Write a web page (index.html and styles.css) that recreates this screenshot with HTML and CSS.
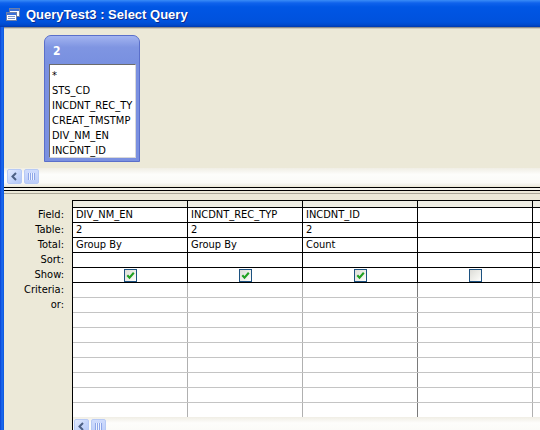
FILE: index.html
```html
<!DOCTYPE html>
<html>
<head>
<meta charset="utf-8">
<link rel="stylesheet" href="styles.css">
</head>
<body>
<div class="win">
  <div class="titlebar">
    <svg class="ticon" viewBox="0 0 14 13" width="14" height="13">
      <rect x="3.5" y="0.5" width="10" height="8" fill="#fff" stroke="#6d7fa8"/>
      <rect x="4" y="1" width="9" height="2" fill="#3a6fd8"/>
      <rect x="0.5" y="4.5" width="10" height="8" fill="#fff" stroke="#6d7fa8"/>
      <rect x="1" y="5" width="9" height="2" fill="#3a6fd8"/>
      <rect x="2" y="8" width="7" height="1" fill="#7b93c9"/>
      <rect x="2" y="10" width="7" height="1" fill="#7b93c9"/>
    </svg>
    <span class="title">QueryTest3 : Select Query</span>
  </div>
  <div class="main">
    <div class="frame-l"></div>
    <div class="client">
      <div class="sep-top"></div>
      <div class="upper">
        <div class="canvas">
          <div class="tbl">
            <div class="tbl-head">2</div>
            <div class="tbl-list">
              <div class="item">*</div>
              <div class="item">STS_CD</div>
              <div class="item">INCDNT_REC_TY</div>
              <div class="item">CREAT_TMSTMP</div>
              <div class="item">DIV_NM_EN</div>
              <div class="item">INCDNT_ID</div>
            </div>
          </div>
        </div>
        <div class="scroll">
          <div class="sbtn"><svg viewBox="0 0 15 15" width="15" height="15"><path d="M9 4 L5.5 7.5 L9 11" fill="none" stroke="#4d6185" stroke-width="2"/></svg></div>
          <div class="sthumb"><span class="grip"></span></div>
        </div>
      </div>
      <div class="splitter"></div>
      <div class="lower">
        <div class="labels">
          <div class="lbl">Field:</div>
          <div class="lbl">Table:</div>
          <div class="lbl">Total:</div>
          <div class="lbl">Sort:</div>
          <div class="lbl">Show:</div>
          <div class="lbl">Criteria:</div>
          <div class="lbl">or:</div>
        </div>
        <div class="grid-area">
          <div class="grid">
            <div class="row sel"><div class="cell"></div><div class="cell"></div><div class="cell"></div><div class="cell"></div><div class="cell"></div></div>
            <div class="row"><div class="cell">DIV_NM_EN</div><div class="cell">INCDNT_REC_TYP</div><div class="cell">INCDNT_ID</div><div class="cell"></div><div class="cell"></div></div>
            <div class="row"><div class="cell">2</div><div class="cell">2</div><div class="cell">2</div><div class="cell"></div><div class="cell"></div></div>
            <div class="row"><div class="cell">Group By</div><div class="cell">Group By</div><div class="cell">Count</div><div class="cell"></div><div class="cell"></div></div>
            <div class="row"><div class="cell"></div><div class="cell"></div><div class="cell"></div><div class="cell"></div><div class="cell"></div></div>
            <div class="row">
              <div class="cell chk"><span class="cb"><svg viewBox="0 0 11 11" width="11" height="11"><path d="M2.3 5.2 L4.5 7.6 L8.8 2.8" fill="none" stroke="#21a121" stroke-width="2.1"/></svg></span></div>
              <div class="cell chk"><span class="cb"><svg viewBox="0 0 11 11" width="11" height="11"><path d="M2.3 5.2 L4.5 7.6 L8.8 2.8" fill="none" stroke="#21a121" stroke-width="2.1"/></svg></span></div>
              <div class="cell chk"><span class="cb"><svg viewBox="0 0 11 11" width="11" height="11"><path d="M2.3 5.2 L4.5 7.6 L8.8 2.8" fill="none" stroke="#21a121" stroke-width="2.1"/></svg></span></div>
              <div class="cell chk"><span class="cb"></span></div>
              <div class="cell"></div>
            </div>
            <div class="row soft"><div class="cell"></div><div class="cell"></div><div class="cell c3"></div><div class="cell"></div><div class="cell"></div></div>
            <div class="row soft"><div class="cell"></div><div class="cell"></div><div class="cell c3"></div><div class="cell"></div><div class="cell"></div></div>
            <div class="row soft"><div class="cell"></div><div class="cell"></div><div class="cell c3"></div><div class="cell"></div><div class="cell"></div></div>
            <div class="row soft"><div class="cell"></div><div class="cell"></div><div class="cell c3"></div><div class="cell"></div><div class="cell"></div></div>
            <div class="row soft"><div class="cell"></div><div class="cell"></div><div class="cell c3"></div><div class="cell"></div><div class="cell"></div></div>
            <div class="row soft"><div class="cell"></div><div class="cell"></div><div class="cell c3"></div><div class="cell"></div><div class="cell"></div></div>
            <div class="row soft"><div class="cell"></div><div class="cell"></div><div class="cell c3"></div><div class="cell"></div><div class="cell"></div></div>
            <div class="row soft"><div class="cell"></div><div class="cell"></div><div class="cell c3"></div><div class="cell"></div><div class="cell"></div></div>
            <div class="row filler"><div class="cell"></div><div class="cell"></div><div class="cell c3"></div><div class="cell"></div><div class="cell"></div></div>
          </div>
          <div class="scroll bottom">
            <div class="sbtn"><svg viewBox="0 0 15 15" width="15" height="15"><path d="M9 4 L5.5 7.5 L9 11" fill="none" stroke="#4d6185" stroke-width="2"/></svg></div>
            <div class="sthumb"><span class="grip"></span></div>
          </div>
        </div>
      </div>
    </div>
  </div>
</div>
</body>
</html>
```
FILE: styles.css
```css
html, body {
  margin: 0;
  padding: 0;
}
body {
  width: 540px;
  height: 430px;
  overflow: hidden;
  font-family: "DejaVu Sans Condensed", "DejaVu Sans", sans-serif;
  font-size: 11px;
  color: #000;
}
.win {
  width: 540px;
  height: 430px;
  display: flex;
  flex-direction: column;
  overflow: hidden;
  background: #ECE9D8;
}
.titlebar {
  height: 27px;
  flex: none;
  box-sizing: border-box;
  padding-top: 1px;
  display: flex;
  align-items: center;
  color: #fff;
  background: linear-gradient(to bottom, #3a8cf7 0px, #0f62ec 3px, #0056e4 7px, #0053df 17px, #0052dc 22px, #0049cc 25px, #003aae 27px);
}
.ticon {
  margin-left: 6px;
  flex: none;
}
.title {
  margin-left: 6px;
  font-family: "Liberation Sans", Arial, sans-serif;
  font-weight: bold;
  font-size: 13px;
  text-shadow: 1px 1px 0 #0c2b8e;
}
.main {
  flex: 1;
  display: flex;
  min-height: 0;
}
.frame-l {
  width: 4px;
  flex: none;
  background: linear-gradient(to right, #0840d2, #1c6cf0 50%, #0b55dc);
}
.client {
  flex: 1;
  display: flex;
  flex-direction: column;
  min-width: 0;
}
.sep-top {
  height: 2px;
  flex: none;
  background: linear-gradient(#8f8f8f 50%, #cfccbf 50%);
}
.upper {
  height: 158px;
  flex: none;
  display: flex;
  flex-direction: column;
  box-sizing: border-box;
  padding-bottom: 1px;
}
.canvas {
  flex: 1;
  padding: 6px 0 0 40px;
  min-height: 0;
}
.tbl {
  width: 96px;
  height: 127px;
  box-sizing: border-box;
  border: 1px solid #5a6fca;
  border-radius: 7px 7px 0 0;
  background: #7a90e0;
  padding: 0 3px 3px 4px;
}
.tbl-head {
  height: 28px;
  box-sizing: border-box;
  padding: 8px 0 0 8px;
  margin: 0 -3px 0 -4px;
  color: #fff;
  font-weight: bold;
  font-size: 12px;
  line-height: 14px;
  border-radius: 6px 6px 0 0;
  background: linear-gradient(#a3b4f0, #7f95e2 40%, #7890e0);
}
.tbl-list {
  height: 94px;
  box-sizing: border-box;
  background: #fff;
  border: 1px solid;
  border-color: #6b6b6b #d8d8d8 #d8d8d8 #6b6b6b;
  padding: 3px 0 0 2px;
  overflow: hidden;
}
.item {
  height: 15px;
  line-height: 15px;
  white-space: nowrap;
}
.scroll {
  height: 18px;
  flex: none;
  box-sizing: border-box;
  display: flex;
  align-items: flex-start;
  padding: 1px 0 0 3px;
  background: linear-gradient(#f0eee5, #fdfdfb 35%, #fbfbf8 80%, #eeece3);
}
.scroll.bottom {
  height: 17px;
  padding: 2px 0 0 1px;
}
.sbtn {
  width: 15px;
  height: 15px;
  box-sizing: border-box;
  border: 1px solid #b7caf5;
  border-radius: 2px;
  background: linear-gradient(135deg, #e3ebfe, #c3d4fb 60%, #b3c7f6);
  display: flex;
  align-items: center;
  justify-content: center;
  flex: none;
}
.sbtn svg {
  margin: -1px;
}
.sthumb {
  width: 15px;
  height: 15px;
  margin-left: 2px;
  box-sizing: border-box;
  border: 1px solid #b7caf5;
  border-radius: 2px;
  background: linear-gradient(#cfdcfd, #bccdf9);
  display: flex;
  align-items: center;
  justify-content: center;
  flex: none;
}
.grip {
  width: 7px;
  height: 7px;
  background: repeating-linear-gradient(to right, #8ea6e8 0 1px, #eef3ff 1px 2px);
}
.splitter {
  height: 7px;
  flex: none;
  background: linear-gradient(#000 0 1px, #f6f5ef 1px 3px, #000 3px 4px, #ECE9D8 4px 6px, #aca899 6px 7px);
}
.lower {
  flex: 1;
  display: flex;
  min-height: 0;
}
.labels {
  width: 68px;
  flex: none;
  box-sizing: border-box;
  padding-top: 14px;
  text-align: right;
}
.lbl {
  height: 15px;
  line-height: 14px;
  padding-right: 8px;
}
.grid-area {
  flex: 1;
  min-width: 0;
  margin-top: 6px;
  border-left: 1px solid #000;
  display: flex;
  flex-direction: column;
  overflow: hidden;
  background: #fff;
}
.grid {
  border-top: 1px solid #000;
  flex: none;
}
.row {
  display: flex;
  height: 15px;
  box-sizing: border-box;
  border-bottom: 1px solid #000;
}
.row.sel {
  height: 7px;
  background: #eeede3;
}
.row.soft {
  border-bottom-color: #c4c4c4;
}
.row.filler {
  height: 14px;
  border-bottom: none;
}
.cell {
  width: 115px;
  flex: none;
  box-sizing: border-box;
  border-right: 1px solid #000;
  padding-left: 3px;
  line-height: 14px;
  white-space: nowrap;
  overflow: hidden;
}
.soft .cell, .filler .cell {
  border-right-color: #b0b0b0;
}
.soft .cell.c3, .filler .cell.c3 {
  border-right-color: #7a7a7a;
}
.cell.chk {
  display: flex;
  justify-content: center;
  align-items: center;
  padding-left: 0;
}
.cb {
  width: 13px;
  height: 13px;
  box-sizing: border-box;
  border: 1px solid #1c5180;
  background: linear-gradient(135deg, #dcdcd7, #f4f4f0 70%, #ffffff);
  display: flex;
  align-items: center;
  justify-content: center;
}
```
